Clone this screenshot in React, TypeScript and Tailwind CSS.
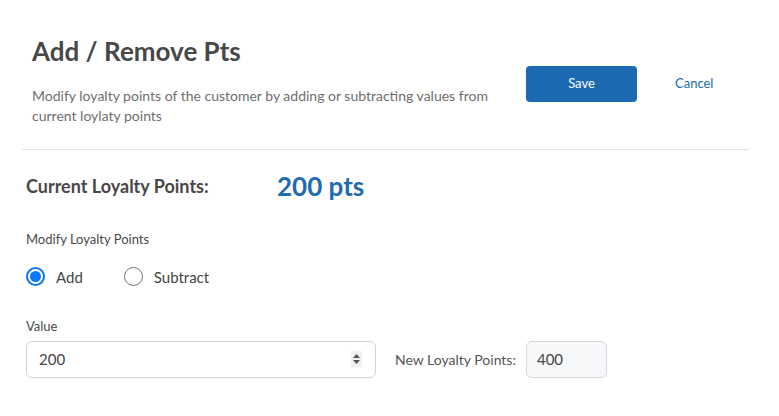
import React from "react";

function Radio({ checked, label }: { checked?: boolean; label: string }) {
  return (
    <label className="flex items-center gap-[11px] cursor-pointer">
      {checked ? (
        <span className="flex h-[19px] w-[19px] items-center justify-center rounded-full border-2 border-[#0b76f6]">
          <span className="h-[11px] w-[11px] rounded-full bg-[#0b76f6]" />
        </span>
      ) : (
        <span className="h-[19px] w-[19px] rounded-full border border-[#767676]" />
      )}
      <span className="text-[15px] text-[#444]">{label}</span>
    </label>
  );
}

export default function App() {
  return (
    <div className="min-h-[416px] w-[779px] bg-white font-['Lato','Open_Sans',sans-serif]">
      <div className="ml-[22px] mr-[30px]">
        {/* header */}
        <div className="flex border-b border-[#e3e3e3] pb-[23px] pl-[10px] pt-[33px]">
          <div className="w-[480px]">
            <h1 className="text-[26px] font-bold leading-[36px] text-[#484848]">Add / Remove Pts</h1>
            <p className="mt-[17px] w-[462px] text-[14px] leading-[20px] text-[#6e6e6e]">
              Modify loyalty points of the customer by adding or subtracting values from current loylaty points
            </p>
          </div>
          <div className="ml-[14px] flex items-start pt-[33px]">
            <button className="h-[36px] w-[111px] rounded-[4px] bg-[#1b6ab2] text-[13px] text-white">Save</button>
            <button className="ml-[38px] h-[36px] text-[13px] text-[#1b6ab2]">Cancel</button>
          </div>
        </div>

        {/* body */}
        <div className="pl-[4px] pt-[17px]">
          <div className="flex items-center">
            <span className="w-[251px] text-[18px] font-bold text-[#484848]">Current Loyalty Points:</span>
            <span className="text-[26px] font-bold text-[#1f6bb0]">200 pts</span>
          </div>

          <div className="mt-[24px] text-[13px] text-[#484848]">Modify Loyalty Points</div>
          <div className="mt-[16px] flex items-center gap-[41px]">
            <Radio checked label="Add" />
            <Radio label="Subtract" />
          </div>

          <div className="mt-[29px] text-[13px] text-[#484848]">Value</div>
          <div className="mt-[4px] flex items-center">
            <div className="flex h-[37px] w-[350px] items-center rounded-[6px] border border-[#cfd3d8] pl-[12px] pr-[13px]">
              <span className="flex-1 text-[15px] text-[#444]">200</span>
              <span className="flex h-[16px] w-[11px] flex-col items-center justify-center gap-[2px] bg-[#f0f0f0]">
                <svg width="7" height="4" viewBox="0 0 7 4"><path d="M3.5 0L7 4H0z" fill="#555" /></svg>
                <svg width="7" height="4" viewBox="0 0 7 4"><path d="M0 0h7L3.5 4z" fill="#555" /></svg>
              </span>
            </div>
            <span className="ml-[19px] text-[14px] text-[#555]">New Loyalty Points:</span>
            <div className="ml-[10px] flex h-[37px] w-[81px] items-center rounded-[6px] border border-[#d3d7dc] bg-[#f7f8fa] pl-[10px] text-[15px] text-[#444]">
              400
            </div>
          </div>
        </div>
      </div>
    </div>
  );
}
